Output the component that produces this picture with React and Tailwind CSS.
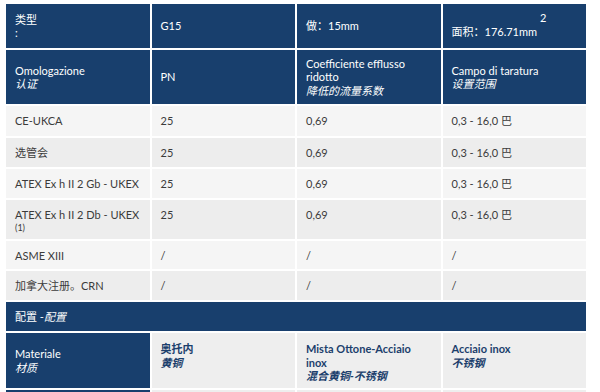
import React from "react";

const font = { fontFamily: 'Lato, "Noto Sans CJK SC", sans-serif' };

function Row({ h, children, cls = "" }) {
  return (
    <div className={`grid grid-cols-4 gap-[2px] ${h} ${cls}`}>{children}</div>
  );
}

const dark = "bg-[#183f6d] text-white";

export default function App() {
  const light = [
    ["CE-UKCA", "25", "0,69", "0,3 - 16,0 巴", "bg-[#f5f5f5]", "h-[30px]"],
    ["选管会", "25", "0,69", "0,3 - 16,0 巴", "bg-[#ededed]", "h-[29px]"],
    ["ATEX Ex h II 2 Gb - UKEX", "25", "0,69", "0,3 - 16,0 巴", "bg-[#f5f5f5]", "h-[29px]"],
    [null, "25", "0,69", "0,3 - 16,0 巴", "bg-[#ededed]", "h-[39px]"],
    ["ASME XIII", "/", "/", "/", "bg-[#f5f5f5]", "h-[28px]"],
    ["加拿大注册。CRN", "/", "/", "/", "bg-[#ededed]", "h-[29px]"],
  ];
  return (
    <div className="w-[600px] h-[392px] overflow-hidden bg-white" style={font}>
      <div className="ml-[6px] mt-[4px] w-[580px] flex flex-col gap-[2px] text-[11px] leading-[13.5px]">
        <Row h="h-[44px]">
          <div className={`${dark} px-[9px] flex flex-col justify-center`}>
            <span>类型</span>
            <span>:</span>
          </div>
          <div className={`${dark} px-[9px] flex items-center`}>G15</div>
          <div className={`${dark} px-[9px] flex items-center`}>做：15mm</div>
          <div className={`${dark} px-[9px] flex items-center pt-[12px]`}>
            <span>面积：176.71mm</span>
            <span className="relative top-[-14px] ml-[3px]">2</span>
          </div>
        </Row>
        <Row h="h-[54px]">
          <div className={`${dark} px-[9px] flex flex-col justify-center`}>
            <span>Omologazione</span>
            <span className="italic">认证</span>
          </div>
          <div className={`${dark} px-[9px] flex items-center`}>PN</div>
          <div className={`${dark} px-[9px] flex flex-col justify-center`}>
            <span>Coefficiente efflusso ridotto</span>
            <span className="italic">降低的流量系数</span>
          </div>
          <div className={`${dark} px-[9px] flex flex-col justify-center`}>
            <span>Campo di taratura</span>
            <span className="italic">设置范围</span>
          </div>
        </Row>
        {light.map((r, i) => (
          <Row key={i} h={r[5]} cls="text-[#3b3b3b]">
            {[0, 1, 2, 3].map((c) => (
              <div key={c} className={`${r[4]} px-[9px] pt-[8px]`}>
                {r[c] === null ? (
                  <>
                    <div>ATEX Ex h II 2 Db - UKEX</div>
                    <div className="text-[9px] leading-[12px]">(1)</div>
                  </>
                ) : (
                  r[c]
                )}
              </div>
            ))}
          </Row>
        ))}
        <div className={`${dark} h-[29px] px-[9px] flex items-center`}>
          <span>配置 -</span>
          <span className="italic">配置</span>
        </div>
        <Row h="h-[55px]">
          <div className={`${dark} px-[9px] flex flex-col justify-center`}>
            <span>Materiale</span>
            <span className="italic">材质</span>
          </div>
          <div className="bg-[#eeeeee] px-[9px] pt-[9px] text-[#1c3f6c] font-bold flex flex-col">
            <span>奥托内</span>
            <span className="italic">黄铜</span>
          </div>
          <div className="bg-[#eeeeee] px-[9px] pt-[9px] text-[#1c3f6c] font-bold flex flex-col">
            <span>Mista Ottone-Acciaio inox</span>
            <span className="italic">混合黄铜-不锈钢</span>
          </div>
          <div className="bg-[#eeeeee] px-[9px] pt-[9px] text-[#1c3f6c] font-bold flex flex-col">
            <span>Acciaio inox</span>
            <span className="italic">不锈钢</span>
          </div>
        </Row>
        <Row h="h-[30px]">
          <div className={dark}></div>
          <div className="bg-[#eeeeee]"></div>
          <div className="bg-[#eeeeee]"></div>
          <div className="bg-[#eeeeee]"></div>
        </Row>
      </div>
    </div>
  );
}
